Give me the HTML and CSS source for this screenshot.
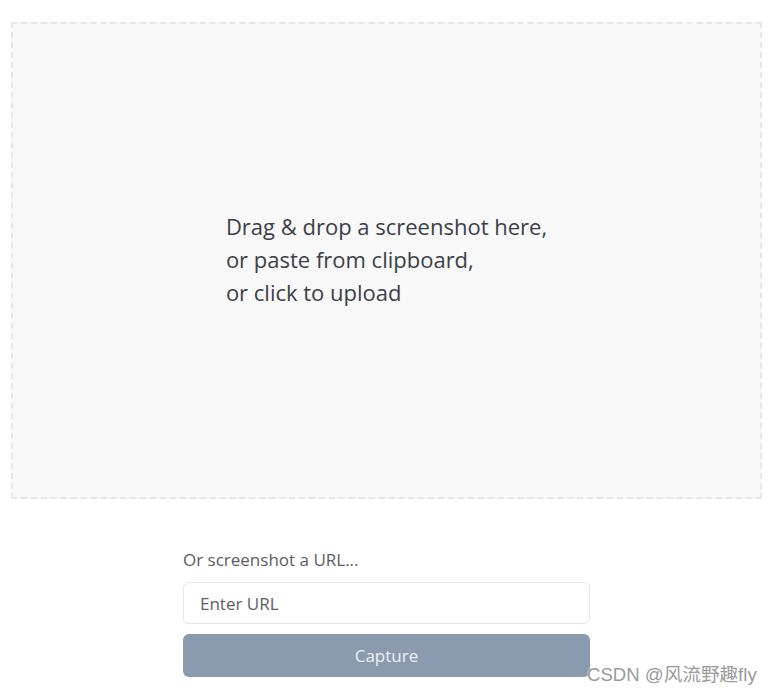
FILE: index.html
```html
<!DOCTYPE html>
<html>
<head>
<meta charset="utf-8">
<link rel="stylesheet" href="styles.css">
</head>
<body>
<div class="page">
  <div class="dropzone">
    <p class="drop-text">Drag &amp; drop a screenshot here,<br>or paste from clipboard,<br>or click to upload</p>
  </div>
  <div class="url-form">
    <label class="url-label">Or screenshot a URL...</label>
    <input class="url-input" type="text" placeholder="Enter URL">
    <button class="capture-btn">Capture</button>
  </div>
</div>
<div class="watermark">CSDN @风流野趣fly</div>
</body>
</html>
```
FILE: styles.css
```css
html, body {
  margin: 0;
  padding: 0;
  background: #ffffff;
  font-family: "Open Sans", "Noto Sans", "Noto Sans CJK SC", sans-serif;
}
.page {
  padding: 22px 12px 0 11px;
  display: flex;
  flex-direction: column;
  align-items: center;
}
.dropzone {
  box-sizing: border-box;
  width: 751px;
  height: 477px;
  border: 2px dashed #e6e7ea;
  background: #f8f8f8;
  display: flex;
  align-items: center;
  justify-content: center;
}
.drop-text {
  margin: 0 0 2px 0;
  font-size: 22px;
  line-height: 33px;
  color: #3b3f4a;
}
.url-form {
  width: 407px;
  margin-top: 50px;
  display: flex;
  flex-direction: column;
}
.url-label {
  font-size: 17px;
  line-height: 22px;
  color: #5a5d63;
  margin-bottom: 11px;
}
.url-input {
  box-sizing: border-box;
  height: 42px;
  border: 1px solid #e3e6ea;
  border-radius: 6px;
  padding: 0 16px;
  font-family: inherit;
  font-size: 17px;
  outline: none;
  margin: 0;
}
.url-input::placeholder {
  color: #5c5f66;
}
.capture-btn {
  margin-top: 10px;
  height: 43px;
  border: none;
  border-radius: 6px;
  background: #8a9aaf;
  color: #eef1f5;
  font-family: inherit;
  font-size: 17px;
}
.watermark {
  position: absolute;
  left: 587px;
  top: 659px;
  font-family: "Liberation Sans", "Noto Sans CJK SC", sans-serif;
  font-size: 18.6px;
  color: #9a9a9a;
  text-shadow: 0 0 2px #ffffff;
}
```
